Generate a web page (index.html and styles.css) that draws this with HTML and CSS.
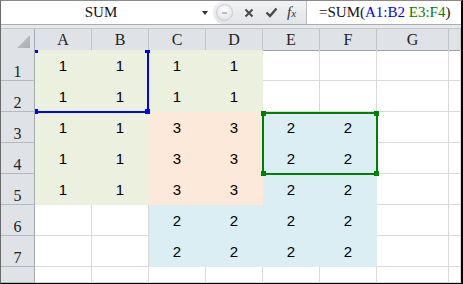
FILE: index.html
```html
<!DOCTYPE html>
<html lang="en">
<head>
    <meta charset="UTF-8">
    <title>SUM - Sheet1</title>
    <link rel="stylesheet" href="styles.css">
</head>
<body>
    <div class="window">
        <div class="formula-bar">
            <div class="name-box">
                <span class="name">SUM</span>
                <span class="drop"></span>
            </div>
            <div class="tools">
                <span class="round-btn"><span></span></span>
                <svg class="icon-x" width="10" height="10" viewBox="0 0 10 10">
                    <path d="M1.5 1.5 L8.5 8.5 M8.5 1.5 L1.5 8.5" stroke="#4a4a4a" stroke-width="2"/>
                </svg>
                <svg class="icon-ok" width="13" height="11" viewBox="0 0 13 11">
                    <path d="M1.5 5.5 L5 9 L11.5 1.5" stroke="#4a4a4a" stroke-width="2.4" fill="none"/>
                </svg>
                <span class="fx">f<span>x</span></span>
            </div>
            <div class="formula">
                <span class="text">=SUM(<span class="ref-blue">A1:B2</span> <span class="ref-green">E3:F4</span>)</span>
            </div>
        </div>
        <div class="gap"></div>

        <div class="sheet">
            <div class="row head">
                <div class="corner">
                    <svg width="33" height="21" viewBox="0 0 33 21">
                        <defs>
                            <linearGradient id="tri" x1="0" y1="0" x2="1" y2="1">
                                <stop offset="0" stop-color="#c6c9cd"/>
                                <stop offset="1" stop-color="#a9adb2"/>
                            </linearGradient>
                        </defs>
                        <polygon points="29,6 29,19 16,19" fill="url(#tri)"/>
                    </svg>
                </div>
                <div class="col">A</div><div class="col">B</div><div class="col">C</div><div class="col">D</div>
                <div class="col">E</div><div class="col">F</div><div class="col">G</div><div class="col"></div>
            </div>

            <div class="row">
                <div class="num">1</div>
                <div class="cell green">1</div><div class="cell green">1</div><div class="cell green">1</div><div class="cell green">1</div>
                <div class="cell"></div><div class="cell"></div><div class="cell"></div><div class="cell"></div>
            </div>
            <div class="row">
                <div class="num">2</div>
                <div class="cell green">1</div><div class="cell green">1</div><div class="cell green">1</div><div class="cell green">1</div>
                <div class="cell"></div><div class="cell"></div><div class="cell"></div><div class="cell"></div>
            </div>
            <div class="row">
                <div class="num">3</div>
                <div class="cell green">1</div><div class="cell green">1</div><div class="cell peach">3</div><div class="cell peach">3</div>
                <div class="cell blue">2</div><div class="cell blue">2</div><div class="cell"></div><div class="cell"></div>
            </div>
            <div class="row">
                <div class="num">4</div>
                <div class="cell green">1</div><div class="cell green">1</div><div class="cell peach">3</div><div class="cell peach">3</div>
                <div class="cell blue">2</div><div class="cell blue">2</div><div class="cell"></div><div class="cell"></div>
            </div>
            <div class="row">
                <div class="num">5</div>
                <div class="cell green">1</div><div class="cell green">1</div><div class="cell peach">3</div><div class="cell peach">3</div>
                <div class="cell blue">2</div><div class="cell blue">2</div><div class="cell"></div><div class="cell"></div>
            </div>
            <div class="row">
                <div class="num">6</div>
                <div class="cell"></div><div class="cell"></div><div class="cell blue">2</div><div class="cell blue">2</div>
                <div class="cell blue">2</div><div class="cell blue">2</div><div class="cell"></div><div class="cell"></div>
            </div>
            <div class="row">
                <div class="num">7</div>
                <div class="cell"></div><div class="cell"></div><div class="cell blue">2</div><div class="cell blue">2</div>
                <div class="cell blue">2</div><div class="cell blue">2</div><div class="cell"></div><div class="cell"></div>
            </div>
            <div class="row last">
                <div class="num"></div>
                <div class="cell"></div><div class="cell"></div><div class="cell"></div><div class="cell"></div>
                <div class="cell"></div><div class="cell"></div><div class="cell"></div><div class="cell"></div>
            </div>

            <!-- range highlights drawn over the cells -->
            <div class="highlights">
                <div class="range range-blue"></div>
                <span class="handle hb tl"></span>
                <span class="handle hb tr"></span>
                <span class="handle hb bl"></span>
                <span class="handle hb br"></span>

                <div class="range range-green"></div>
                <span class="handle hg tl"></span>
                <span class="handle hg tr"></span>
                <span class="handle hg bl"></span>
                <span class="handle hg br"></span>
            </div>
        </div>
    </div>
</body>
</html>
```

FILE: styles.css
```css
body {
    margin: 0;
    padding: 0;
    background: #ffffff;
}

.window {
    width: 463px;
    height: 284px;
    box-sizing: border-box;
    border-top: 1px solid #8a8a8a;
    border-left: 1px solid #6a6a6a;
    border-right: 2px solid #000;
    border-bottom: 1px solid #000;
    overflow: hidden;
    display: flex;
    flex-direction: column;
}

/* formula bar */
.formula-bar {
    display: flex;
    height: 24px;
    box-sizing: border-box;
    border-bottom: 1px solid #a8abaf;
    font-family: 'Liberation Serif', 'DejaVu Serif', serif;
    font-size: 15px;
    color: #111;
}
.name-box {
    width: 212px;
    display: flex;
    align-items: center;
    background: #fff;
}
.name-box .name {
    width: 200px;
    text-align: center;
}
.name-box .drop {
    width: 0;
    height: 0;
    border-left: 3px solid transparent;
    border-right: 3px solid transparent;
    border-top: 4px solid #333;
    margin-left: 1px;
    margin-top: 1px;
}
.tools {
    width: 93px;
    display: flex;
    align-items: center;
    background: linear-gradient(#f1f2f4, #e2e4e7);
    border-radius: 12px 0 0 12px;
    border-right: 1px solid #b9bdc2;
}
.round-btn {
    width: 15px;
    height: 15px;
    margin-left: 3px;
    border-radius: 50%;
    border: 1px solid #c9ccd0;
    background: radial-gradient(circle at 50% 35%, #ffffff, #d9dcdf);
    display: flex;
    align-items: center;
    justify-content: center;
}
.round-btn span {
    width: 5px;
    height: 2px;
    background: #b8bbbf;
}
.icon-x {
    margin-left: 11px;
}
.icon-ok {
    margin-left: 11px;
}
.fx {
    margin-left: 9px;
    font-style: italic;
    font-size: 15px;
    color: #333;
    line-height: 1;
}
.fx span {
    font-size: 11px;
}
.formula {
    flex: 1;
    display: flex;
    align-items: center;
    padding-left: 12px;
    background: #fff;
}
.formula .text {
    white-space: pre;
}
.ref-blue {
    color: #0000ff;
}
.ref-green {
    color: #008000;
}

.gap {
    height: 3px;
    background: #e6e8eb;
}

/* grid */
.sheet {
    position: relative;
    flex: 1;
}
.row {
    display: grid;
    grid-template-columns: 34px repeat(6, 57px) 72px 1fr;
    height: 31px;
}
.row.last {
    height: 16px;
}
.row > div {
    box-sizing: border-box;
}
.row.head {
    height: 22px;
    background: #dfe2e6;
    border-top: 1px solid #c3c7cc;
    box-sizing: border-box;
}
.corner {
    border-right: 1px solid #a3a9b0;
    border-bottom: 1px solid #9aa1a8;
}
.corner svg {
    display: block;
}
.col {
    border-right: 1px solid #c2c6cb;
    border-bottom: 1px solid #9aa1a8;
    font-family: 'Liberation Serif', 'DejaVu Serif', serif;
    font-size: 16px;
    color: #222;
    display: flex;
    align-items: center;
    justify-content: center;
}
.num {
    background: #dfe2e6;
    border-right: 1px solid #a3a9b0;
    border-bottom: 1px solid #b4b9bf;
    font-family: 'Liberation Serif', 'DejaVu Serif', serif;
    font-size: 16px;
    line-height: 16px;
    color: #222;
    display: flex;
    align-items: flex-end;
    justify-content: center;
    padding-bottom: 0;
}
.cell {
    border-right: 1px solid #d9d9d9;
    border-bottom: 1px solid #d9d9d9;
    font-family: 'Liberation Sans', Arial, sans-serif;
    font-size: 15px;
    color: #000;
    display: flex;
    align-items: center;
    justify-content: center;
}
.cell.green {
    background: #ebf1de;
    border-color: #ebf1de;
}
.cell.peach {
    background: #fde9d9;
    border-color: #fde9d9;
}
.cell.blue {
    background: #daeef3;
    border-color: #daeef3;
}

/* formula reference highlights */
.highlights {
    position: absolute;
    left: 34px;
    top: 22px;
    right: 0;
    bottom: 0;
    overflow: hidden;
    pointer-events: none;
}
.range {
    position: absolute;
    box-sizing: border-box;
}
.range-blue {
    left: 0;
    top: 0;
    width: 114px;
    height: 63px;
    border-right: 2px solid #0000ff;
    border-bottom: 2px solid #0000ff;
}
.range-green {
    left: 227px;
    top: 62px;
    width: 116px;
    height: 63px;
    border: 2px solid #008000;
}
.handle {
    position: absolute;
    width: 5px;
    height: 5px;
}
.hb {
    background: #0000ff;
}
.hg {
    background: #008000;
}
.hb.tl { left: -2px; top: -2px; }
.hb.tr { left: 110px; top: -2px; }
.hb.bl { left: -2px; top: 59px; }
.hb.br { left: 110px; top: 59px; }
.hg.tl { left: 226px; top: 61px; }
.hg.tr { left: 339px; top: 61px; }
.hg.bl { left: 226px; top: 121px; }
.hg.br { left: 339px; top: 121px; }
```
